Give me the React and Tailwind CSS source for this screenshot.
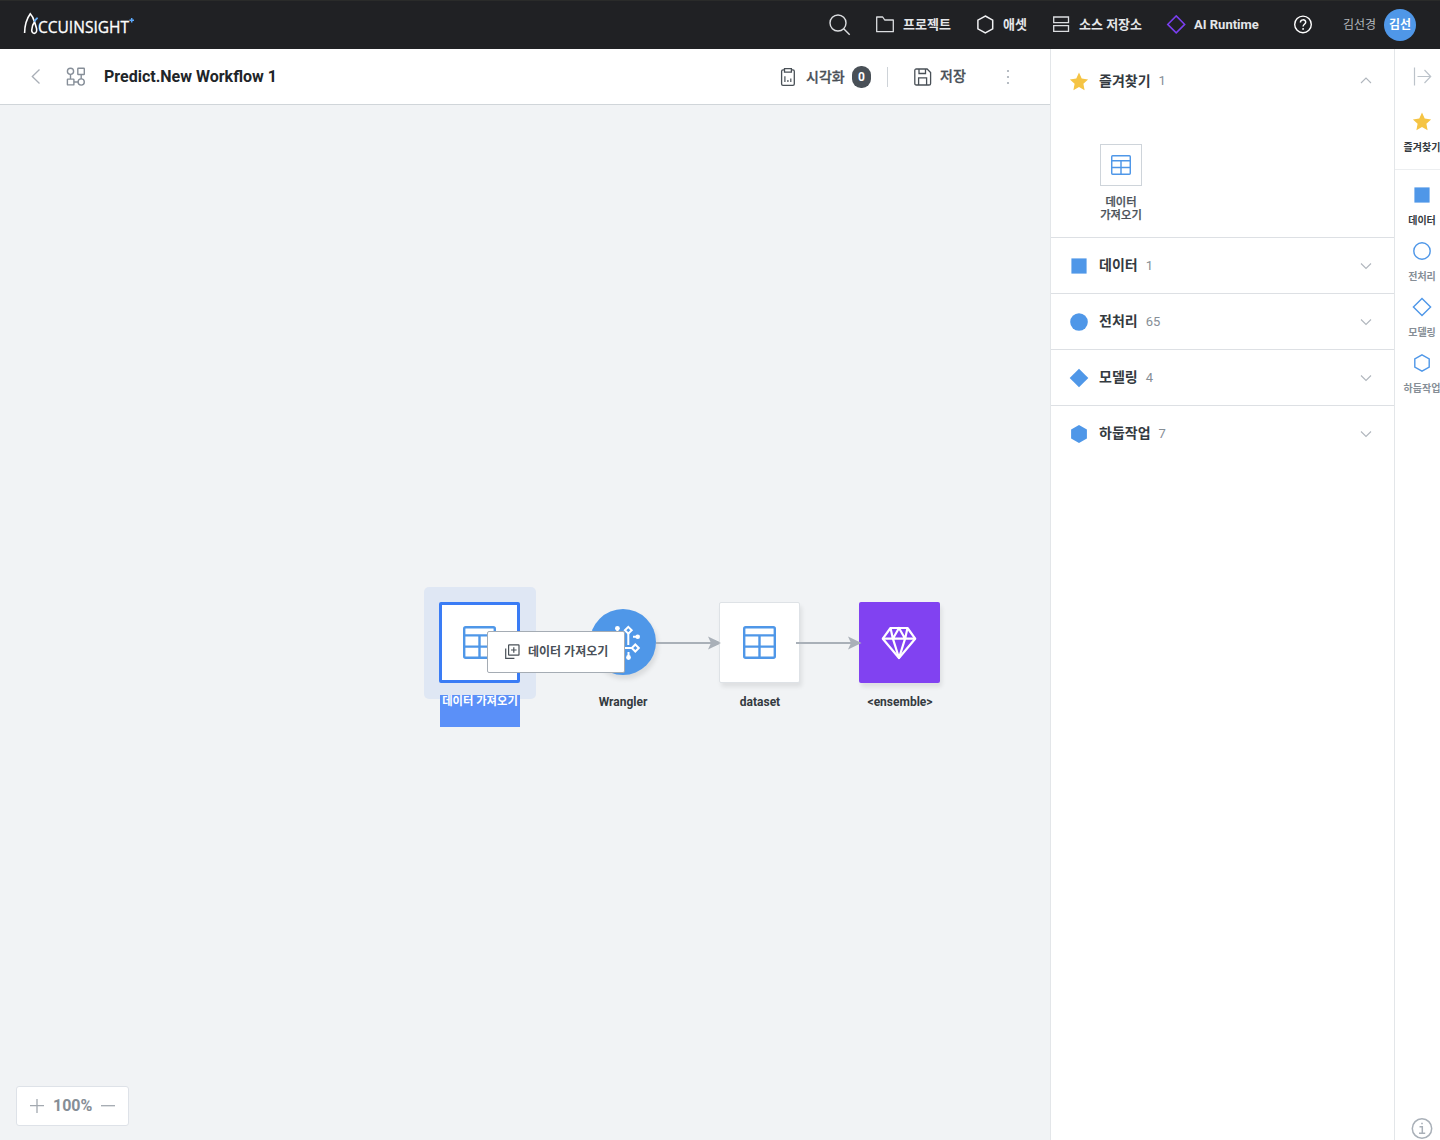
import React from "react";

const BLUE = "#4f97e8";

function Svg({ w, h = w, className = "", children, ...rest }) {
  return (
    <svg
      width={w}
      height={h}
      viewBox={`0 0 ${w} ${h}`}
      fill="none"
      className={"block shrink-0 " + className}
      {...rest}
    >
      {children}
    </svg>
  );
}

function TableIcon({ size }) {
  return (
    <svg width={size} height={size} viewBox="0 0 33 33" fill="none" stroke={BLUE} strokeWidth="2.4" className="block shrink-0">
      <rect x="1.2" y="1.2" width="30.6" height="30.6" rx="1.5" />
      <path d="M1 9.4H32M1 20.6H32M16.5 9.4V32" />
    </svg>
  );
}

function Star() {
  return (
    <Svg w={20}>
      <path d="M10 .6l2.7 6 6.4.8-4.700 4.400 1.200 6.400L10 15.100l-5.600 3.100 1.200-6.400L.9 7.400l6.400-.8z" fill="#f5c444" />
    </Svg>
  );
}

const shapes = {
  star: <Star />,
  square: <Svg w={20}><path d="M2.4 2.4h15.2v15.2H2.4z" fill={BLUE} /></Svg>,
  circle: <Svg w={20}><circle cx="10" cy="10" r="8.8" fill={BLUE} /></Svg>,
  diamond: <Svg w={20}><path d="M10 .7l9.3 9.3-9.3 9.3L.7 10z" fill={BLUE} /></Svg>,
  hexagon: <Svg w={20}><path d="M10 1l7.9 4.5v9L10 19l-7.9-4.5v-9z" fill={BLUE} /></Svg>,
  circleLine: <Svg w={20}><circle cx="10" cy="10" r="8.2" stroke={BLUE} strokeWidth="1.4" /></Svg>,
  diamondLine: <Svg w={20}><path d="M10 1.4l8.6 8.6-8.6 8.6L1.4 10z" stroke={BLUE} strokeWidth="1.4" /></Svg>,
  hexagonLine: <Svg w={20}><path d="M10 1.8l7.2 4.1v8.2L10 18.2l-7.2-4.1V5.9z" stroke={BLUE} strokeWidth="1.4" /></Svg>,
};

function Logo() {
  return (
    <Svg w={114} h={28}>
      <path d="M1.600 22C1.700 14.500 4.600 6.500 7.300 2.800c2 2 3.300 4.900 4.300 8.200l1.900 6.200c1.500 6.200-4.700 6.600-4.800 2.100 0-3.100 1.300-6.500 3.200-9.300" stroke="#fff" strokeWidth="1.600" />
      <path d="M11.300 10.700c.8-1.500 1.900-2.800 3.300-3.900" stroke="#66aef8" strokeWidth="1.800" />
      <text x="15" y="22.300" textLength="91" lengthAdjust="spacingAndGlyphs" fill="#fff" fontSize="16" fontFamily="'Open Sans', sans-serif" fontWeight="400" stroke="#fff" strokeWidth=".3">CCUINSIGHT</text>
      <path d="M108.700 7v4.600M106.400 9.300h4.600" stroke="#5ca8fa" strokeWidth="1.500" />
    </Svg>
  );
}

function NavItem({ className, icon, children }) {
  return (
    <div className={"flex shrink-0 items-center " + className}>
      {icon}
      <span className="text-[13px] leading-5 font-bold whitespace-nowrap text-[#e4e6e9]">{children}</span>
    </div>
  );
}

function Header() {
  return (
    <header className="flex h-[49px] shrink-0 items-center border-t border-[#2a2b2a] bg-[#202124] pl-[23px]">
      <Logo />
      <div className="w-[691px] shrink-0" />
      <Svg w={24} stroke="#dcdee1" strokeWidth="1.4" className="mr-[24px]">
        <circle cx="10" cy="10" r="8" />
        <path d="M15.700 15.700l6 6" />
      </Svg>
      <NavItem className="w-[101px]" icon={
        <Svg w={18} className="mr-[9px]"><path d="M.7 1h6l2 3h8.600v11.700H.7z" stroke="#dcdee1" strokeWidth="1.300" strokeLinejoin="round" /></Svg>
      }>프로젝트</NavItem>
      <NavItem className="w-[75px]" icon={
        <Svg w={18} h={20} className="mr-[8px]"><path d="M8.300 1l7.400 4.200v8.600L8.300 18 .9 13.800V5.200z" stroke="#f0f1f3" strokeWidth="1.500" /></Svg>
      }>애셋</NavItem>
      <NavItem className="w-[115px]" icon={
        <Svg w={18} className="mr-[9px]"><path d="M1.700 1h14.800v5.600H1.700zM1.700 9.700h14.800v5.600H1.700z" stroke="#dcdee1" strokeWidth="1.300" /></Svg>
      }>소스 저장소</NavItem>
      <NavItem className="w-[126px]" icon={
        <Svg w={20} className="mr-[8px] -ml-px"><path d="M10.200 .9l8.500 8.500-8.500 8.500L1.700 9.400z" stroke="#7a3ff0" strokeWidth="1.500" /></Svg>
      }>AI Runtime</NavItem>
      <Svg w={20} className="mr-[30px]">
        <circle cx="10" cy="9.400" r="8.300" stroke="#fff" strokeWidth="1.400" />
        <path d="M7.400 7.500c.1-3.500 5.300-3.400 5.300-.3 0 2-2.600 2.200-2.600 4.300" stroke="#fff" strokeWidth="1.500" />
        <circle cx="10.100" cy="13.900" r=".95" fill="#fff" />
      </Svg>
      <div className="w-[41px] shrink-0 text-[12px] whitespace-nowrap text-[#b4b7bb]">김선경</div>
      <div className="flex size-8 shrink-0 items-center justify-center rounded-full bg-[#4f97e8] text-[12px] font-bold whitespace-nowrap text-white">김선</div>
    </header>
  );
}

function Toolbar() {
  return (
    <div className="flex h-[56px] shrink-0 items-center border-b border-[#d0d5d9] bg-white pl-[28px]">
      <Svg w={16} className="mr-[21px]"><path d="M11.500 .5L4.300 7.500l7.200 7" stroke="#a9afb7" strokeWidth="1.300" /></Svg>
      <Svg w={22} stroke="#868e98" strokeWidth="1.400" className="mr-[17px]">
        <circle cx="5.500" cy="5.300" r="3.100" />
        <rect x="12.800" y="2.200" width="6.500" height="6.300" rx=".5" />
        <rect x="2.400" y="13.100" width="6.500" height="5.800" rx=".5" />
        <circle cx="16.200" cy="16" r="3.100" />
        <path d="M5.500 8.400v4.700M8.900 16h4.200M16.200 8.500v4.400" />
      </Svg>
      <h1 className="w-[676px] shrink-0 text-[16px] leading-6 font-bold text-[#212529]">Predict.New Workflow 1</h1>
      <Svg w={16} h={20} stroke="#495057" strokeWidth="1.300" className="mr-[10px]">
        <path d="M4.500 2.900H3q-1.400 0-1.400 1.400V17q0 1.400 1.400 1.400h9.900q1.400 0 1.400-1.400V4.300q0-1.400-1.400-1.400h-1.500" />
        <path d="M4.500 1.600h6.900v3.600H4.500z" />
        <path d="M4.900 9.300v5.600M7.900 13v2M10.800 11.500v3.500" strokeWidth="1.200" />
      </Svg>
      <span className="w-[46px] shrink-0 text-[14px] leading-5 font-medium whitespace-nowrap text-[#495057] [-webkit-text-stroke:.3px_#495057]">시각화</span>
      <span className="flex h-[22px] w-[19px] shrink-0 items-center justify-center rounded-[9px] bg-[#495057] text-[12px] font-bold text-white">0</span>
      <span className="mr-[26px] ml-4 h-5 w-px shrink-0 bg-[#ced3d8]" />
      <Svg w={18} stroke="#495057" strokeWidth="1.300" className="mr-[8px]">
        <path d="M.8 2.600Q.8 1 2.400 1h10.700l3.500 3.500v10.900q0 1.600-1.600 1.600H2.400Q.8 17 .8 15.400z" />
        <path d="M5 1v4.500h6.500V1M4.600 17v-7.200h8V17" />
      </Svg>
      <span className="mb-[2px] w-[64px] shrink-0 text-[14px] leading-5 font-medium whitespace-nowrap text-[#495057] [-webkit-text-stroke:.3px_#495057]">저장</span>
      <Svg w={8} h={18} fill="#a5acb5">
        <circle cx="4" cy="3" r="1.100" fill="#a5acb5" />
        <circle cx="4" cy="9" r="1.100" fill="#a5acb5" />
        <circle cx="4" cy="15" r="1.100" fill="#a5acb5" />
      </Svg>
    </div>
  );
}

function NodeLabel({ className, children }) {
  return (
    <div className={"absolute text-center font-bold whitespace-nowrap " + className}>{children}</div>
  );
}

function Arrow({ className }) {
  return (
    <Svg w={66} h={16} className={"absolute " + className}>
      <path d="M0 8h56" stroke="#a9b0b8" strokeWidth="2" />
      <path d="M52 1.500L65.500 8 52 14.500 55 8z" fill="#a9b0b8" />
    </Svg>
  );
}

function Canvas() {
  return (
    <div className="relative flex-1 overflow-hidden bg-[#f1f3f5]">
      <div className="absolute top-[482px] left-[424px] h-[112px] w-[112px] rounded-[5px] bg-[#dfe7f4]" />
      <div className="absolute top-[497px] left-[439px] flex h-[81px] w-[81px] items-center justify-center rounded-[2px] border-[3px] border-[#3a7cf5] bg-white">
        <TableIcon size={33} />
      </div>
      <NodeLabel className="top-[590px] left-[440px] h-[32px] w-[80px] bg-[#5b90f8] text-[11.3px] leading-[14px] text-white">데이터 가져오기</NodeLabel>

      <div className="absolute top-[504px] left-[590px] size-[66px] rounded-full bg-[#4f97e8] shadow-[2px_4px_5px_rgba(0,0,0,0.1)]">
        <Svg w={66} stroke="#fff" strokeWidth="2">
          <path d="M38.300 24v12M27.400 19v10l4 5M43 27.800h5M45 39H30M38.500 43v5" />
          <path d="M38.300 17.900l3.400 3.400-3.400 3.400-3.400-3.400zM45.300 35.500l3.500 3.500-3.500 3.500-3.500-3.500z" fill={BLUE} />
          <g fill="#fff" stroke="none">
            <circle cx="27.400" cy="19.300" r="2.400" />
            <circle cx="47.700" cy="27.800" r="2.300" />
            <circle cx="38.500" cy="48.500" r="2.400" />
          </g>
        </Svg>
      </div>
      <NodeLabel className="top-[589px] left-[583px] w-[80px] text-[12px] leading-4 text-[#343a40]">Wrangler</NodeLabel>

      <Arrow className="top-[530px] left-[656px]" />
      <div className="absolute top-[497px] left-[719px] flex h-[81px] w-[81px] items-center justify-center rounded-[2px] border border-[#dee2e6] bg-white shadow-[2px_4px_4px_rgba(0,0,0,0.08)]">
        <TableIcon size={33} />
      </div>
      <Svg w={8} h={14} className="absolute top-[531px] left-[714px]"><path d="M0 3.700L7 7 0 10.300z" fill="#a9b0b8" /></Svg>
      <NodeLabel className="top-[589px] left-[720px] w-[80px] text-[12px] leading-4 text-[#343a40]">dataset</NodeLabel>

      <div className="absolute top-[497px] left-[859px] flex h-[81px] w-[81px] items-center justify-center rounded-[2px] bg-[#8142f1] shadow-[2px_4px_4px_rgba(0,0,0,0.08)]">
        <Svg w={37} h={34} stroke="#fff" strokeWidth="2.200" strokeLinejoin="round">
          <path d="M9.500 2h17l7.700 10.700L18 32 1.800 12.700z" />
          <path d="M1.800 12.700h32.400M9.500 2l2.400 10.700L18 32l6.100-19.300L26.500 2M11.900 12.700L18 2l6.100 10.700" />
        </Svg>
      </div>
      <Arrow className="top-[530px] left-[796px]" />
      <NodeLabel className="top-[589px] left-[860px] w-[80px] text-[12px] leading-4 text-[#343a40]">&lt;ensemble&gt;</NodeLabel>

      <div className="absolute top-[526px] left-[487px] flex h-[42px] w-[138px] items-center rounded-[2px] border border-[#a5acb4] bg-white pl-[17px]">
        <Svg w={16} stroke="#495057" strokeWidth="1.200" className="mr-[7px]">
          <rect x="3.600" y=".8" width="10.400" height="10.400" rx=".5" />
          <path d="M8.800 3.200v5.600M6 6h5.600M.7 4.400v10h8.700" />
        </Svg>
        <span className="text-[12px] leading-4 font-bold whitespace-nowrap text-[#495057]">데이터 가져오기</span>
      </div>

      <div className="absolute top-[981px] left-[16px] flex h-[40px] w-[113px] items-center rounded-[3px] border border-[#dee2e8] bg-white pl-[13px]">
        <Svg w={14} stroke="#a3a9b0" strokeWidth="1.300" className="mr-[9px]"><path d="M7 0v14M0 6.700h14" /></Svg>
        <span className="w-[48px] text-[16px] leading-5 font-bold text-[#868e96]">100%</span>
        <Svg w={14} stroke="#a3a9b0" strokeWidth="1.300"><path d="M0 6.700h14" /></Svg>
      </div>
    </div>
  );
}

function SectionHead({ shape, title, count, open, border }) {
  return (
    <div className={"flex h-[56px] items-center pr-[22px] pl-[18px] " + (border ? "border-t border-[#dde0e4]" : "")}>
      <div className="mt-px mr-[10px]">{shapes[shape]}</div>
      <span className={"mr-[8px] text-[14px] leading-5 font-bold whitespace-nowrap text-[#343a40] " + (border ? "mb-[2px]" : "")}>{title}</span>
      <span className="flex-1 text-[13px] leading-5 text-[#868e96]">{count}</span>
      <Svg w={12} className={open ? "" : "mt-px"}>
        <path d={open ? "M1 8l5-5 5 5" : "M1 3.500l5 5 5-5"} stroke="#b0b6bd" strokeWidth="1.100" />
      </Svg>
    </div>
  );
}

const sections = [
  { shape: "square", title: "데이터", count: 1 },
  { shape: "circle", title: "전처리", count: 65 },
  { shape: "diamond", title: "모델링", count: 4 },
  { shape: "hexagon", title: "하둡작업", count: 7 },
];

function Palette() {
  return (
    <section className="flex w-[344px] shrink-0 flex-col border-l border-[#e3e6e9] bg-white">
      <div className="h-[188px] pt-[4px]">
        <SectionHead shape="star" title="즐겨찾기" count={1} open />
        <div className="mt-[35px] ml-[40px] flex w-[60px] flex-col items-center">
          <div className="flex size-[42px] items-center justify-center border border-[#ced4da] bg-white">
            <TableIcon size={20} />
          </div>
          <div className="mt-[10px] text-center text-[11.3px] leading-[13px] font-medium whitespace-nowrap text-[#495057] [-webkit-text-stroke:.25px_#495057]">데이터<br />가져오기</div>
        </div>
      </div>
      {sections.map((s) => (
        <SectionHead key={s.title} {...s} border />
      ))}
    </section>
  );
}

function RailItem({ shape, label, dim }) {
  return (
    <div className="flex h-[56px] w-[54px] shrink-0 flex-col items-center">
      {shapes[shape]}
      <span className={"mt-[8px] text-[10px] leading-4 font-bold whitespace-nowrap " + (dim ? "text-[#868e96]" : "text-[#343a40]")}>{label}</span>
    </div>
  );
}

function Rail() {
  return (
    <aside className="flex w-[46px] shrink-0 flex-col overflow-hidden border-l border-[#e3e6e9] bg-white">
      <div className="mt-[17px] mb-[26px] ml-[18px]">
        <Svg w={20}><path d="M1.500 1.500v18M4.500 10.500h13M11.500 4l6.200 6.500-6.200 6.500" stroke="#bcc3ca" strokeWidth="1.200" /></Svg>
      </div>
      <div className="h-[57px] shrink-0"><RailItem shape="star" label="즐겨찾기" /></div>
      <div className="mb-[15px] h-px shrink-0 bg-[#eceef0]" />
      <RailItem shape="square" label="데이터" />
      <RailItem shape="circleLine" label="전처리" dim />
      <RailItem shape="diamondLine" label="모델링" dim />
      <RailItem shape="hexagonLine" label="하둡작업" dim />
      <div className="mt-auto ml-[16px]">
        <Svg w={22} h={23} stroke="#a9b0b8" strokeWidth="1.500">
          <circle cx="11" cy="11.500" r="9.700" />
          <path d="M8.500 9.800h2.800v6.500M8 16.300h6.200M10.200 6.500h1.600" />
        </Svg>
      </div>
    </aside>
  );
}

export default function App() {
  return (
    <div className="flex h-[1140px] w-[1440px] flex-col overflow-hidden bg-white font-[Roboto,'Noto_Sans_CJK_KR',sans-serif]">
      <Header />
      <div className="flex min-h-0 flex-1">
        <main className="flex w-[1050px] shrink-0 flex-col">
          <Toolbar />
          <Canvas />
        </main>
        <Palette />
        <Rail />
      </div>
    </div>
  );
}
